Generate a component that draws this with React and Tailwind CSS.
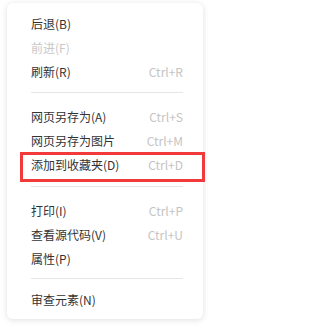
import React from "react";

const Row = ({ label, shortcut, disabled }) => (
  <div className="flex h-6 items-center justify-between">
    <span className={disabled ? "text-[#c8c8c8]" : "text-[#333333]"}>{label}</span>
    {shortcut && <span className="text-[#c4c4c4]">{shortcut}</span>}
  </div>
);

const Sep = ({ top, bottom }) => (
  <div className={`${top} ${bottom}`}>
    <div className="h-px bg-[#e6e6e6]" />
  </div>
);

export default function App() {
  return (
    <div
      className="relative h-[331px] w-[210px] bg-white pt-[3px] pl-[7px] text-[12px]"
      style={{ fontFamily: '"Noto Sans CJK SC", "Noto Sans", sans-serif' }}
    >
      <div className="flex h-[316px] w-[196px] flex-col rounded-md bg-white pt-[9px] pl-6 pr-5 shadow-[0_1px_6px_rgba(0,0,0,0.13)]">
        <Row label="后退(B)" />
        <Row label="前进(F)" disabled />
        <Row label="刷新(R)" shortcut="Ctrl+R" />
        <div className="pt-[8px] pb-[12px]"><div className="h-px bg-[#e6e6e6]" /></div>
        <Row label="网页另存为(A)" shortcut="Ctrl+S" />
        <Row label="网页另存为图片" shortcut="Ctrl+M" />
        <Row label="添加到收藏夹(D)" shortcut="Ctrl+D" />
        <div className="pt-[9px] pb-[12px]"><div className="h-px bg-[#e6e6e6]" /></div>
        <Row label="打印(I)" shortcut="Ctrl+P" />
        <Row label="查看源代码(V)" shortcut="Ctrl+U" />
        <Row label="属性(P)" />
        <div className="pt-[7px] pb-[9px]"><div className="h-px bg-[#e6e6e6]" /></div>
        <Row label="审查元素(N)" />
      </div>
      <div className="absolute left-[20px] top-[152px] h-[30px] w-[185px] border-[3px] border-[#f23a3a]" />
    </div>
  );
}
